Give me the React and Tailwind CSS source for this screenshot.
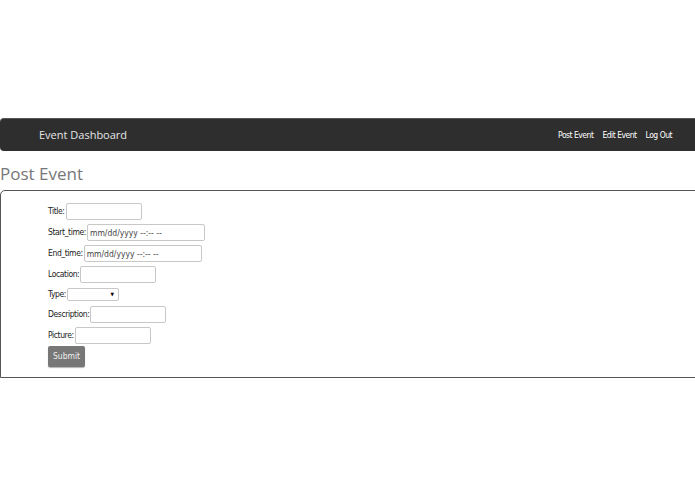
import { useState } from "react";

const cond = { fontFamily: '"DejaVu Sans Condensed", "Liberation Sans Narrow", "Liberation Sans", sans-serif' };

const Field = ({ label, h = "h-[21px]", children }) => (
  <div className={`flex ${h} items-center gap-[1px]`}>
    <label className="text-[8.5px] tracking-[-0.4px] text-[#222]">{label}</label>
    {children}
  </div>
);

const TextBox = ({ w = "w-[76px]", value }) => (
  <input
    type="text"
    readOnly
    defaultValue={value}
    className={`${w} h-[17px] rounded-[2px] border border-[#c8c8c8] bg-white px-[2px] text-[8.5px] text-[#444] outline-none`}
  />
);

const App = () => {
  const [type, setType] = useState("");

  return (
    <div className="h-[494px] w-[695px] overflow-hidden bg-white pt-[118px]" style={cond}>
      <nav className="flex h-[33px] items-center justify-between rounded-l-[4px] border-t border-[#555] bg-[#2e2e2e] pl-[39px] pr-[23px]">
        <span className="text-[11px] text-[#e6e6e6]" style={{ fontFamily: '"Open Sans", sans-serif' }}>
          Event Dashboard
        </span>
        <div className="flex gap-[9px] text-[8.5px] tracking-[-0.5px] text-white">
          <a>Post Event</a>
          <a>Edit Event</a>
          <a>Log Out</a>
        </div>
      </nav>

      <h1
        className="mt-[9px] h-[30px] text-[17px] leading-[27px] text-[#777]"
        style={{ fontFamily: '"Open Sans", sans-serif' }}
      >
        Post Event
      </h1>

      <form className="-mr-[4px] h-[188px] rounded-tl-[5px] border border-[#555] pl-[47px] pt-[10px]">
        <Field label="Title:">
          <TextBox />
        </Field>
        <Field label="Start_time:">
          <TextBox w="w-[118px]" value="mm/dd/yyyy --:-- --" />
        </Field>
        <Field label="End_time:">
          <TextBox w="w-[118px]" value="mm/dd/yyyy --:-- --" />
        </Field>
        <Field label="Location:" h="h-[20px]">
          <TextBox />
        </Field>
        <Field label="Type:" h="h-[20px]">
          <div className="relative flex">
            <select
              value={type}
              onChange={(e) => setType(e.target.value)}
              className="block h-[13px] w-[52px] appearance-none rounded-[2px] border border-[#c8c8c8] bg-white text-[8px] outline-none"
            >
              <option value=""></option>
            </select>
            <span className="pointer-events-none absolute right-[5px] top-[3px] text-[5px] leading-[6px] text-black">▼</span>
          </div>
        </Field>
        <Field label="Description:">
          <TextBox />
        </Field>
        <Field label="Picture:">
          <TextBox />
        </Field>
        <button
          type="button"
          className="block h-[21px] w-[37px] rounded-[2px] bg-[#777] text-[8.5px] text-[#eee] shadow-[0_1px_1px_rgba(0,0,0,0.3)]"
        >
          Submit
        </button>
      </form>
    </div>
  );
};

export default App;
